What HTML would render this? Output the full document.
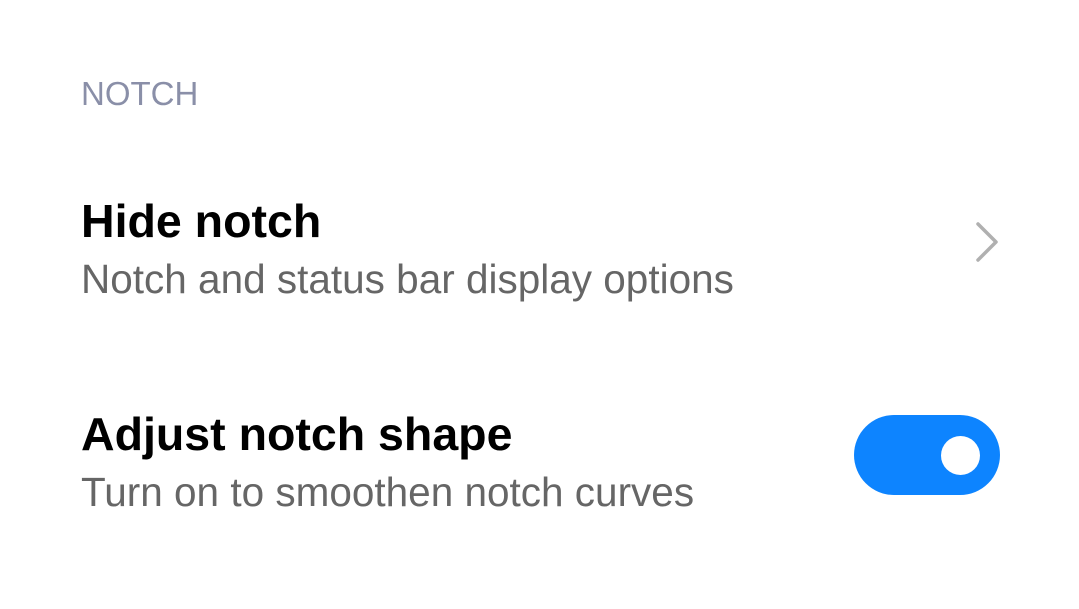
<!DOCTYPE html>
<html><head><style>
body{margin:0;width:1079px;height:609px;background:#fff;position:relative;overflow:hidden;font-family:"Liberation Sans",sans-serif}
.t{position:absolute;left:81px;line-height:1;white-space:nowrap}
.h{font-size:33px;color:#8a8fa8}
.ti{font-size:46.5px;font-weight:bold;color:#000}
.s{font-size:40.5px;color:#666}
.tog{position:absolute;left:854px;top:415px;width:146px;height:80px;border-radius:40px;background:#0d84ff}
.knob{position:absolute;left:941px;top:436px;width:39px;height:39px;border-radius:50%;background:#fff}
</style></head><body>
<div class="t h" style="top:77px">NOTCH</div>
<div class="t ti" style="top:198px">Hide notch</div>
<div class="t s" style="top:259px">Notch and status bar display options</div>
<svg style="position:absolute;left:970px;top:220px" width="34" height="44"><path d="M8 4 L26 22 L8 40" fill="none" stroke="#b0b0b0" stroke-width="3.5" stroke-linecap="round" stroke-linejoin="round"/></svg>
<div class="t ti" style="top:411px">Adjust notch shape</div>
<div class="t s" style="top:472px">Turn on to smoothen notch curves</div>
<div class="tog"></div><div class="knob"></div>
</body></html>
